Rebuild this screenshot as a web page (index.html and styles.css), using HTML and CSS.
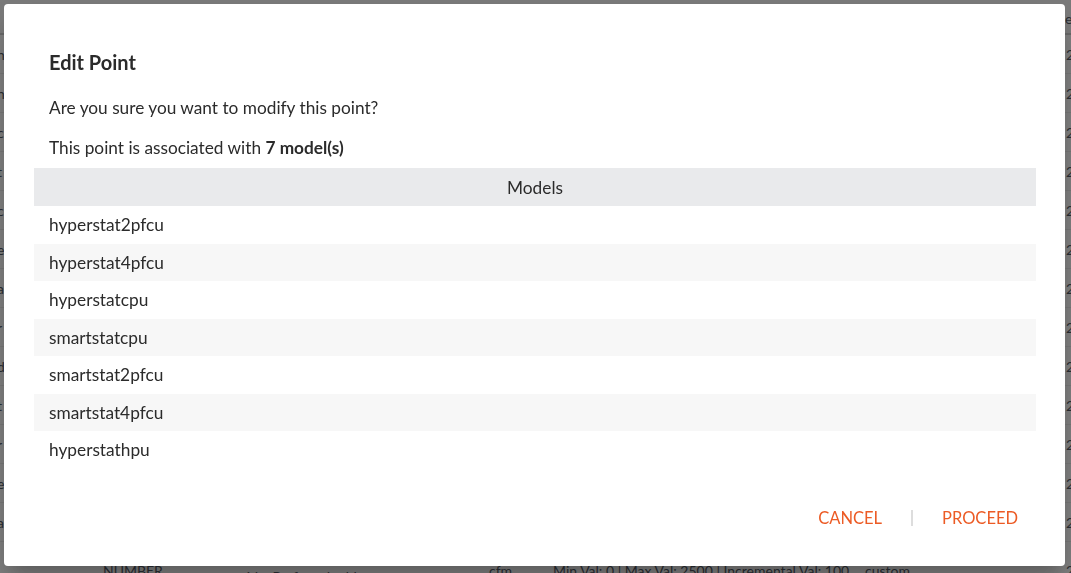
FILE: index.html
```html
<!DOCTYPE html>
<html>
<head>
<meta charset="utf-8">
<link rel="stylesheet" href="styles.css">
</head>
<body>
<div class="page">
  <div class="page-head"><span class="ph-end">e</span></div>
  <div class="bg-rows">
    <div class="bg-row"><span class="c0">n</span><span class="c-end">2</span></div>
    <div class="bg-row"><span class="c0">n</span><span class="c-end">2</span></div>
    <div class="bg-row"><span class="c0">c</span><span class="c-end">2</span></div>
    <div class="bg-row"><span class="c0">t</span><span class="c-end">2</span></div>
    <div class="bg-row"><span class="c0">c</span><span class="c-end">2</span></div>
    <div class="bg-row"><span class="c0">e</span><span class="c-end">2</span></div>
    <div class="bg-row"><span class="c0">a</span><span class="c-end">2</span></div>
    <div class="bg-row"><span class="c0">r</span><span class="c-end">2</span></div>
    <div class="bg-row"><span class="c0">d</span><span class="c-end">2</span></div>
    <div class="bg-row"><span class="c0">t</span><span class="c-end">2</span></div>
    <div class="bg-row"><span class="c0">r</span><span class="c-end">2</span></div>
    <div class="bg-row"><span class="c0">e</span><span class="c-end">2</span></div>
    <div class="bg-row"><span class="c0">a</span><span class="c-end">2</span></div>
    <div class="bg-row last">
      <span class="c0"></span>
      <span class="c1">NUMBER</span>
      <span class="c2">outside: Preferred table</span>
      <span class="c3">cfm</span>
      <span class="c4">Min Val: 0 | Max Val: 2500 | Incremental Val: 100</span>
      <span class="c5">custom</span>
      <span class="c6">PM</span>
      <span class="c-end">2</span>
    </div>
  </div>
</div>

<div class="backdrop">
  <div class="dialog">
    <h2 class="dialog-title">Edit Point</h2>
    <p class="dialog-text">Are you sure you want to modify this point?</p>
    <p class="dialog-text">This point is associated with <b>7 model(s)</b></p>
    <div class="models">
      <div class="models-head">Models</div>
      <div class="model-row">hyperstat2pfcu</div>
      <div class="model-row alt">hyperstat4pfcu</div>
      <div class="model-row">hyperstatcpu</div>
      <div class="model-row alt">smartstatcpu</div>
      <div class="model-row">smartstat2pfcu</div>
      <div class="model-row alt">smartstat4pfcu</div>
      <div class="model-row">hyperstathpu</div>
    </div>
    <div class="actions">
      <button class="btn">CANCEL</button>
      <span class="sep"></span>
      <button class="btn">PROCEED</button>
    </div>
  </div>
</div>
</body>
</html>
```

FILE: styles.css
```css
html, body {
  margin: 0;
  padding: 0;
}
body {
  width: 1071px;
  height: 573px;
  overflow: hidden;
  font-family: Lato, "Open Sans", sans-serif;
  background: #ffffff;
  color: #2b2b2b;
}

/* background page */
.page {
  width: 1071px;
  height: 573px;
  overflow: hidden;
  font-size: 14px;
  color: #555b66;
}
.page-head {
  height: 33px;
  border-bottom: 2px solid #d0d0d0;
  display: flex;
  justify-content: flex-end;
  align-items: flex-end;
  background: #f5f5f5;
}
.ph-end {
  width: 6px;
  overflow: hidden;
  padding-bottom: 6px;
}
.bg-rows {
  display: flex;
  flex-direction: column;
}
.bg-row {
  height: 38px;
  display: flex;
  align-items: center;
  border-bottom: 1px solid #eee;
  white-space: nowrap;
}
.bg-row.last {
  align-items: flex-start;
  padding-top: 20px;
  height: 60px;
}
.c0 { width: 8px; margin-left: -3px; }
.c1 { width: 117px; margin-left: 98px; }
.c2 { width: 269px; padding-top: 6px; }
.c3 { width: 64px; }
.c4 { width: 312px; }
.c5 { width: 115px; }
.c6 { width: 86px; padding-top: 8px; }
.c-end { margin-left: auto; width: 5px; overflow: hidden; }

/* modal */
.backdrop {
  position: fixed;
  inset: 0;
  background: rgba(0, 0, 0, 0.5);
  padding: 4px 6px 7px 4px;
  box-sizing: border-box;
  display: flex;
}
.dialog {
  flex: 1;
  background: #ffffff;
  border-radius: 4px;
  padding: 46px 29px 0 30px;
  display: flex;
  flex-direction: column;
  box-shadow: 0 11px 15px -7px rgba(0,0,0,0.2), 0 24px 38px 3px rgba(0,0,0,0.14);
}
.dialog-title {
  margin: 0 0 22px 15px;
  font-size: 20px;
  line-height: 24px;
  font-weight: 700;
  color: #2b2b2b;
}
.dialog-text {
  margin: 0 0 16px 15px;
  font-size: 17.25px;
  line-height: 24px;
  color: #2b2b2b;
}
.dialog-text b {
  font-weight: 700;
}
.dialog-text + .dialog-text {
  margin-bottom: 8px;
}
.models {
  display: flex;
  flex-direction: column;
  font-size: 17.3px;
  color: #2b2b2b;
}
.models-head {
  height: 38px;
  background: #e9eaec;
  display: flex;
  align-items: center;
  justify-content: center;
}
.model-row {
  height: 37.5px;
  display: flex;
  align-items: center;
  padding-left: 15px;
}
.model-row.alt {
  background: #f7f7f7;
}
.actions {
  display: flex;
  align-items: center;
  justify-content: flex-end;
  margin-top: 37px;
  padding-right: 18px;
  gap: 29px;
}
.btn {
  background: none;
  border: none;
  padding: 0;
  font-family: Lato, "Open Sans", sans-serif;
  font-size: 16.5px;
  line-height: 24px;
  color: #ec5b25;
  cursor: pointer;
}
.sep {
  width: 2px;
  height: 16px;
  background: #dddddd;
}
```
